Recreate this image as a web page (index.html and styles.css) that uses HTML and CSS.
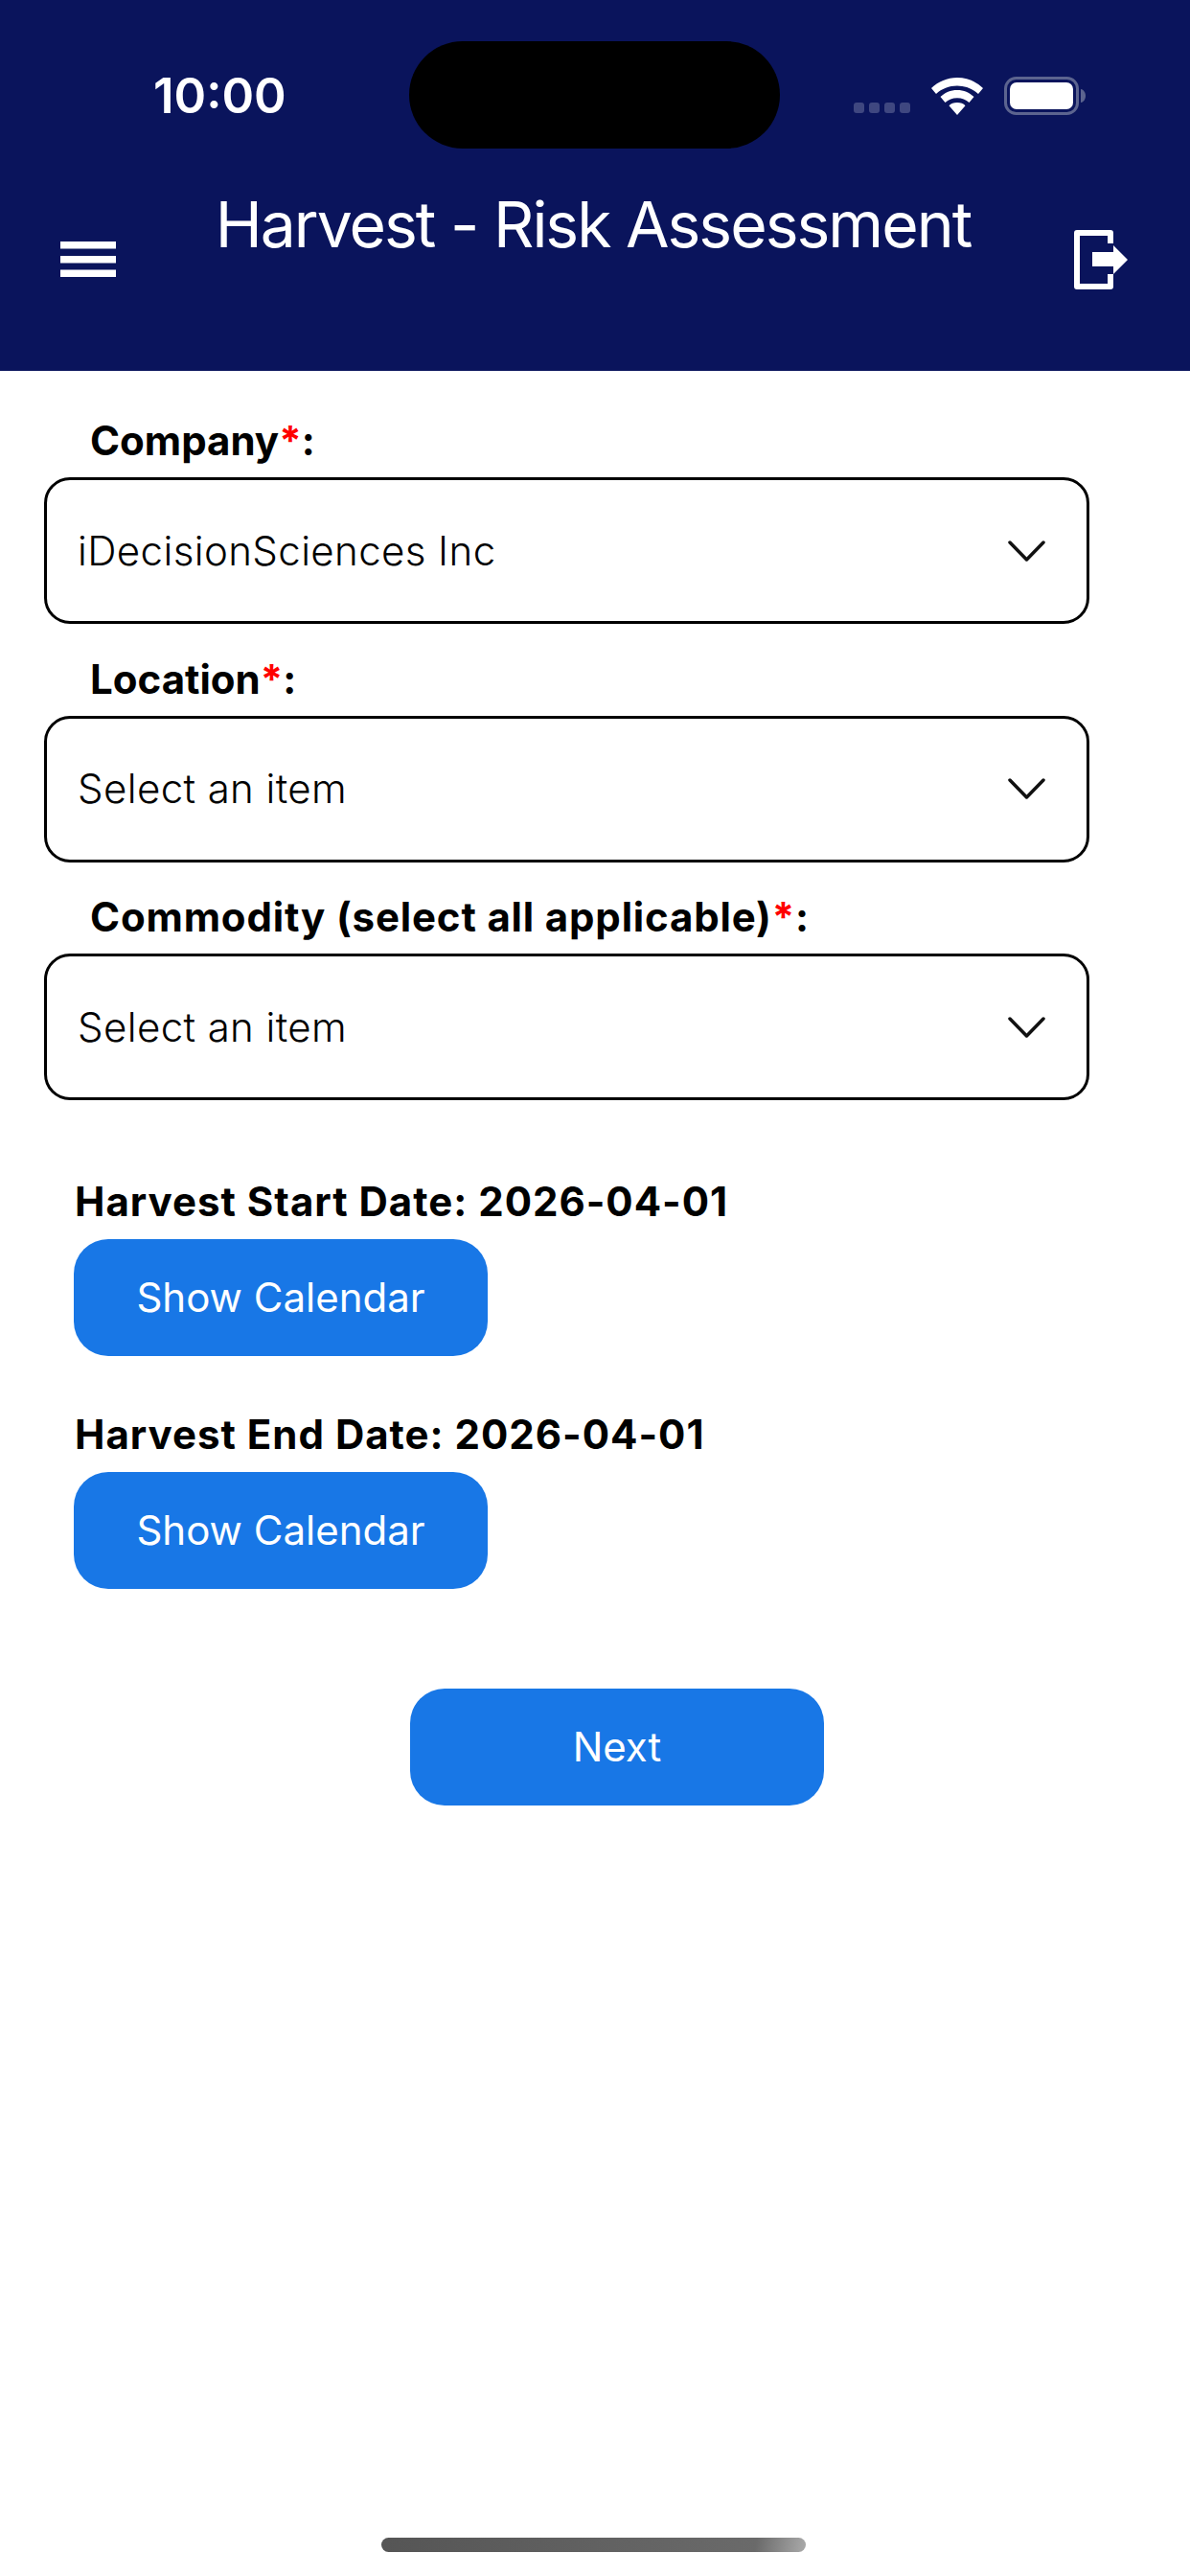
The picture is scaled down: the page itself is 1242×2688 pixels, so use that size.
FILE: index.html
```html
<!DOCTYPE html>
<html lang="en">
<head>
<meta charset="utf-8">
<title>Harvest - Risk Assessment</title>
<link rel="stylesheet" href="styles.css">
</head>
<body>
<div class="screen">
  <header class="header">
    <div class="status">
      <span class="time">10:00</span>
      <div class="status-icons">
        <div class="dots"><i></i><i></i><i></i><i></i></div>
        <svg class="wifi" width="54" height="39" viewBox="0 0 54 39"><path fill="#fff" d="M27 0C16.500 0 7.500 4 0 11l5 6C11 11.500 18.500 8.500 27 8.500S43 11.500 49 17l5-6C46.500 4 37.500 0 27 0z"/><path fill="#fff" d="M27 13c-7 0-12.500 2.500-17.500 7l5 6c3.500-3 7.500-4.800 12.500-4.800S36 23 39.500 26l5-6C39.500 15.500 34 13 27 13z"/><path fill="#fff" d="M27 26c-3.600 0-6.500 1.200-8.500 3.200L27 39l8.500-9.800C33.500 27.200 30.600 26 27 26z"/></svg>
        <svg class="battery" width="86" height="40" viewBox="0 0 86 40"><rect x="1.500" y="1.500" width="75" height="37" rx="11" fill="none" stroke="#5c648f" stroke-width="3"/><rect x="6" y="6" width="66" height="28" rx="7" fill="#fff"/><path fill="#5c648f" d="M80 13c3 .5 5 3.500 5 7s-2 6.500-5 7z"/></svg>
      </div>
    </div>
    <div class="island"></div>
    <div class="appbar">
      <svg class="menu" width="58" height="37" viewBox="0 0 58 37"><path fill="#fff" d="M0 0h58v7.500H0zM0 15h58v7.500H0zM0 29.500h58V37H0z"/></svg>
      <h1 class="title">Harvest - Risk Assessment</h1>
      <svg class="exit" width="56" height="62" viewBox="0 0 56 62"><path fill="none" stroke="#fff" stroke-width="6" stroke-linejoin="round" d="M38 14V3H3v56h35V46"/><path fill="#fff" d="M19 23h22v-7l15 15-15 15v-8H19z"/></svg>
    </div>
  </header>

  <main class="form">
    <div class="field">
      <label class="field-label">Company<span class="req">*</span>:</label>
      <div class="select"><span>iDecisionSciences Inc</span><svg class="chev" width="39" height="22" viewBox="0 0 39 22"><path fill="none" stroke="#111" stroke-width="3.500" stroke-linecap="round" stroke-linejoin="round" d="M2 2l17.500 18L37 2"/></svg></div>
    </div>
    <div class="field">
      <label class="field-label">Location<span class="req">*</span>:</label>
      <div class="select"><span>Select an item</span><svg class="chev" width="39" height="22" viewBox="0 0 39 22"><path fill="none" stroke="#111" stroke-width="3.500" stroke-linecap="round" stroke-linejoin="round" d="M2 2l17.500 18L37 2"/></svg></div>
    </div>
    <div class="field">
      <label class="field-label field-label-long">Commodity (select all applicable)<span class="req">*</span>:</label>
      <div class="select"><span>Select an item</span><svg class="chev" width="39" height="22" viewBox="0 0 39 22"><path fill="none" stroke="#111" stroke-width="3.500" stroke-linecap="round" stroke-linejoin="round" d="M2 2l17.500 18L37 2"/></svg></div>
    </div>

    <div class="dates">
      <div class="date">
        <div class="date-label">Harvest Start Date: 2026-04-01</div>
        <button class="btn">Show Calendar</button>
      </div>
      <div class="date">
        <div class="date-label">Harvest End Date: 2026-04-01</div>
        <button class="btn">Show Calendar</button>
      </div>
    </div>

    <div class="next-row"><button class="btn">Next</button></div>
  </main>

  <div class="home-bar"></div>
</div>
</body>
</html>
```
FILE: styles.css
```css
* { box-sizing: border-box; }
html, body { margin: 0; padding: 0; background: #fff; }
body { font-family: Inter, "Liberation Sans", sans-serif; color: #000; }
.screen { position: relative; width: 1242px; height: 2688px; overflow: hidden; background: #fff; }

.header { position: relative; height: 387px; background: #0a145c; color: #fff; padding-top: 80px; }
.status { display: flex; justify-content: space-between; align-items: flex-start; height: 40px; padding: 0 108px 0 160px; }
.time { font-size: 51px; font-weight: 600; line-height: 40px; }
.status-icons { display: flex; align-items: flex-start; }
.dots { display: flex; gap: 5px; margin-top: 27px; margin-right: 22px; }
.dots i { display: block; width: 11px; height: 11px; border-radius: 3px; background: #3f4780; }
.wifi { margin-top: 1px; margin-right: 22px; }
.island { position: absolute; left: 427px; top: 43px; width: 387px; height: 112px; border-radius: 56px; background: #000; }

.appbar { display: flex; justify-content: space-between; align-items: flex-start; padding: 0 65px 0 63px; margin-top: 120px; position: relative; }
.menu { margin-top: 12px; }
.title { position: absolute; left: 0; right: 4px; top: -46px; margin: 0; text-align: center; font-size: 66px; font-weight: 400; line-height: 80px; letter-spacing: -2px; color: #fff; }
.exit { display: block; }

.form { padding: 0 105px 0 46px; display: flex; flex-direction: column; }
.field { display: flex; flex-direction: column; margin-top: 26px; }
.field + .field { margin-top: 0; }
.field-label { height: 85px; padding-left: 48px; padding-top: 22px; font-size: 42px; font-weight: 700; line-height: 50px; }
.field-label-long { letter-spacing: 0.83px; }
.req { color: #f00; }
.select { height: 153px; border: 3px solid #000; border-radius: 27px; padding: 0 43px 0 32px; display: flex; justify-content: space-between; align-items: center; font-size: 42px; font-weight: 300; line-height: 50px; letter-spacing: 0.4px; margin-bottom: 10.5px; }

.dates { padding-left: 32px; display: flex; flex-direction: column; margin-top: 70px; gap: 57px; }
.date { display: flex; flex-direction: column; align-items: flex-start; }
.date-label { font-size: 42px; font-weight: 700; line-height: 50px; letter-spacing: 1px; margin-bottom: 14px; }
.btn { display: block; width: 432px; height: 122px; border: 0; border-radius: 36px; background: #1877e6; color: #fff; font-family: inherit; font-size: 42px; font-weight: 400; }
.date .btn { margin-left: -1px; }
.next-row { display: flex; padding-left: 382px; margin-top: 104px; }

.home-bar { position: absolute; left: 398px; top: 2648px; width: 443px; height: 15px; border-radius: 8px; background: linear-gradient(100deg, #555 0%, #6a6a6a 88%, #aaa 100%); }
```
